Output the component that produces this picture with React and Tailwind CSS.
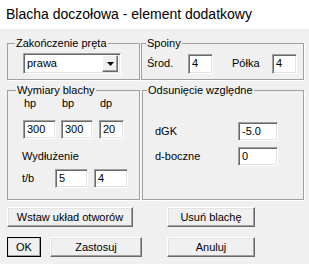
import React from 'react';

// classic win32 look: sunken edit, raised button, etched group box
const editCls =
  'bg-white border border-t-[#a0a0a0] border-l-[#a0a0a0] border-b-white border-r-white shadow-[inset_1px_1px_0_#696969,inset_-1px_-1px_0_#e3e3e3] pl-[3px] flex items-center text-[11px] leading-none';

const btnCls =
  'h-[20px] flex items-center justify-center bg-[#f0f0f0] border border-t-white border-l-white border-b-[#696969] border-r-[#696969] shadow-[inset_-1px_-1px_0_#a0a0a0,inset_1px_1px_0_#e3e3e3] text-[11px]';

const Edit = ({ value, w, h = 19 }) => (
  <div className={editCls} style={{ width: w, height: h }}>
    {value}
  </div>
);

const Group = ({ title, legendCls, className, children }) => (
  <fieldset className="border border-[#a0a0a0] shadow-[1px_1px_0_white] p-0">
    <legend className={`${legendCls} px-[1px] text-[11px] leading-[13px]`}>{title}</legend>
    <div className={className}>{children}</div>
  </fieldset>
);

const App = () => {
  return (
    <div
      className="w-[309px] h-[264px] bg-[#f0f0f0] text-black overflow-hidden"
      style={{ fontFamily: '"Liberation Sans", Arial, sans-serif' }}
    >
      {/* Title bar */}
      <div className="h-[29px] bg-white flex items-center pl-[6px] text-[14px]">
        Blacha doczołowa - element dodatkowy
      </div>

      <div className="px-[7px]">
        {/* Row 1 */}
        <div className="mt-[8px] grid grid-cols-[133px_163px] gap-x-[1px]">
          <Group title="Zakończenie pręta" legendCls="ml-[7px]" className="pt-[3px] pb-[5px] pl-[15px]">
            <div className={`${editCls} w-[98px] h-[21px] justify-between pr-[2px]`}>
              <span>prawa</span>
              <div className="w-[16px] h-[17px] bg-[#f0f0f0] border border-t-white border-l-white border-b-[#696969] border-r-[#696969] shadow-[inset_-1px_-1px_0_#a0a0a0] flex items-center justify-center">
                <svg width="7" height="4" viewBox="0 0 7 4">
                  <path d="M0 0h7L3.5 4z" fill="#000" />
                </svg>
              </div>
            </div>
          </Group>

          <Group title="Spoiny" legendCls="ml-[4px]" className="pt-[3px] pb-[5px] pl-[5px]">
            <div className="flex items-center h-[21px] text-[11px]">
              <span className="w-[41px]">Środ.</span>
              <Edit value="4" w={25} h={20} />
              <span className="ml-[19px] w-[40px]">Półka</span>
              <Edit value="4" w={25} h={20} />
            </div>
          </Group>
        </div>

        {/* Row 2 */}
        <div className="mt-[4px] grid grid-cols-[133px_162px] gap-x-[2px]">
          <Group title="Wymiary blachy" legendCls="ml-[8px]" className="pb-[11px] pl-[15px] text-[11px]">
            <div className="flex">
              <div className="flex flex-col w-[33px]">
                <span className="pl-[1px] leading-[13px]">hp</span>
                <div className="mt-[10px]"><Edit value="300" w={33} /></div>
              </div>
              <div className="flex flex-col w-[32px] ml-[5px]">
                <span className="pl-[1px] leading-[13px]">bp</span>
                <div className="mt-[10px]"><Edit value="300" w={32} /></div>
              </div>
              <div className="flex flex-col w-[25px] ml-[6px]">
                <span className="pl-[1px] leading-[13px]">dp</span>
                <div className="mt-[10px]"><Edit value="20" w={25} /></div>
              </div>
            </div>
            <div className="mt-[11px] leading-[13px] -ml-[1px]">Wydłużenie</div>
            <div className="mt-[6px] flex items-center -ml-[1px]">
              <span className="w-[33px]">t/b</span>
              <Edit value="5" w={33} />
              <div className="ml-[6px]"><Edit value="4" w={34} /></div>
            </div>
          </Group>

          <Group title="Odsunięcie względne" legendCls="ml-[4px]" className="pl-[12px] text-[11px]">
            <div className="mt-[25px] flex items-center">
              <span className="w-[83px]">dGK</span>
              <Edit value="-5.0" w={40} />
            </div>
            <div className="mt-[6px] flex items-center">
              <span className="w-[83px]">d-boczne</span>
              <Edit value="0" w={40} />
            </div>
          </Group>
        </div>

        {/* Buttons */}
        <div className="mt-[7px] flex">
          <div className={`${btnCls} w-[126px]`}>Wstaw układ otworów</div>
          <div className={`${btnCls} w-[88px] ml-[34px]`}>Usuń blachę</div>
        </div>
        <div className="mt-[10px] flex">
          <div className={`${btnCls} w-[34px] outline outline-1 outline-black -outline-offset-1`}>OK</div>
          <div className={`${btnCls} w-[92px] ml-[9px]`}>Zastosuj</div>
          <div className={`${btnCls} w-[88px] ml-[25px]`}>Anuluj</div>
        </div>
      </div>
    </div>
  );
};

export default App;
